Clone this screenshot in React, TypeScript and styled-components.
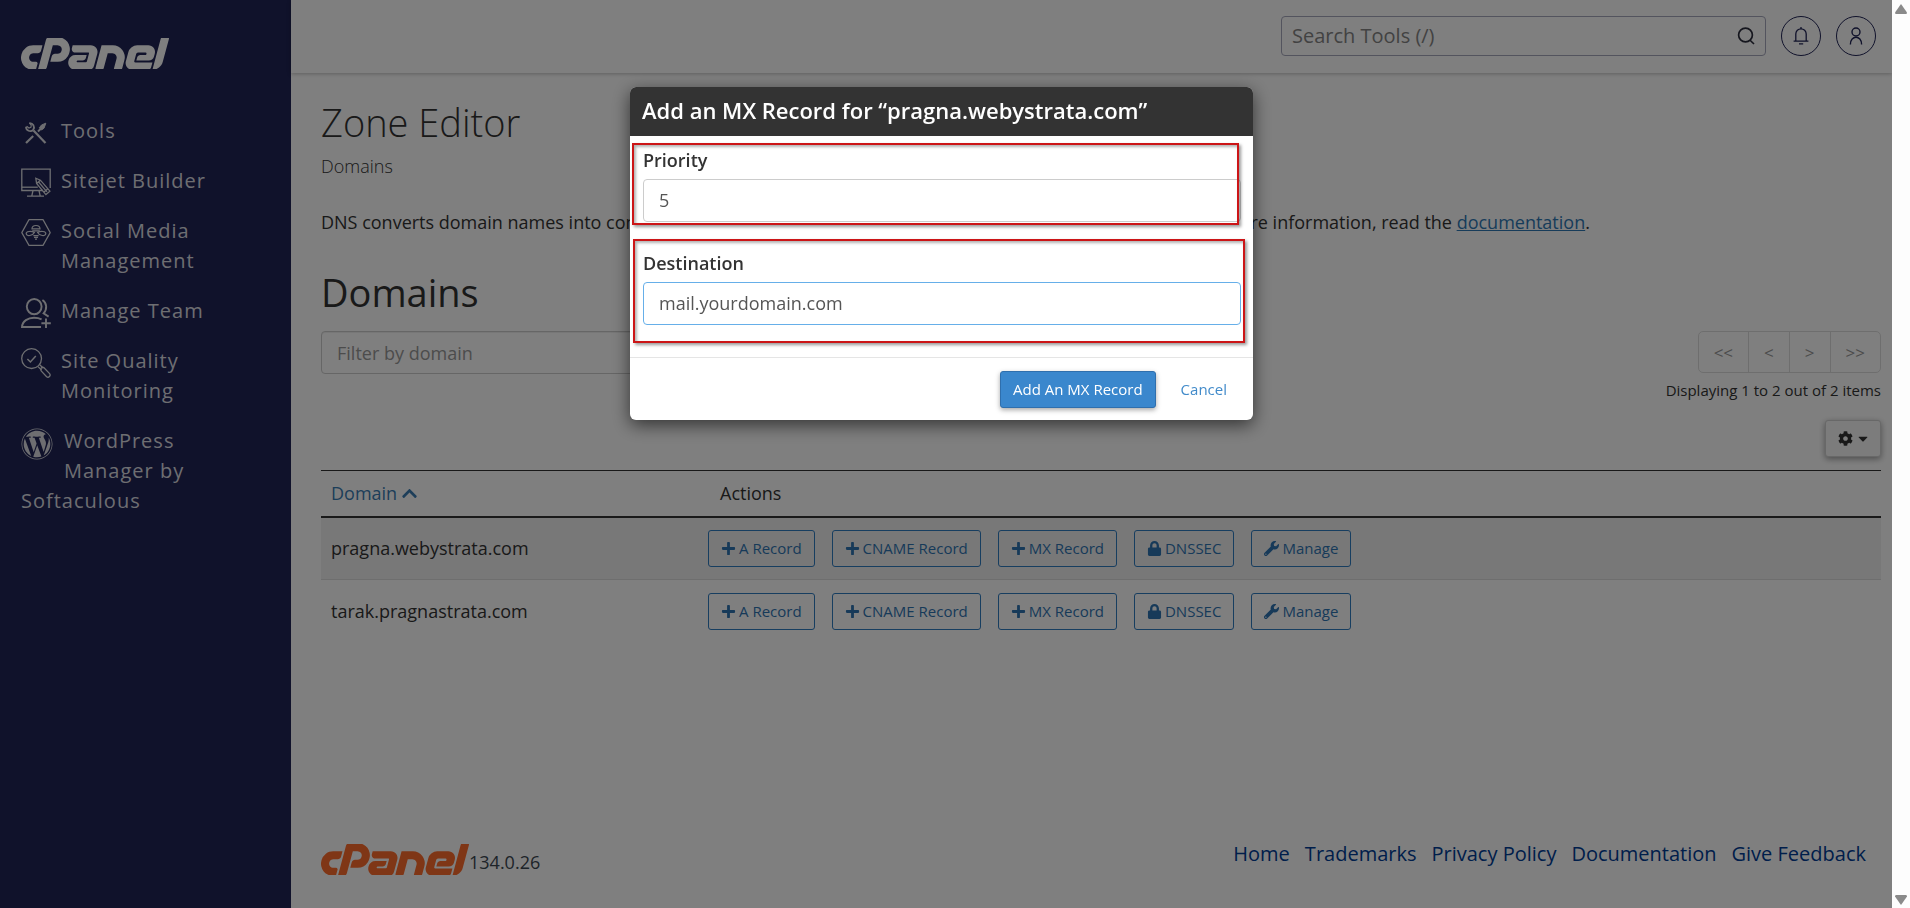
import React from "react";
import styled, { createGlobalStyle, css } from "styled-components";
import { SiCpanel } from "react-icons/si";
import {
  FaCaretDown,
  FaChevronUp,
  FaCog,
  FaLock,
  FaPlus,
  FaWordpress,
  FaWrench,
} from "react-icons/fa";

const GlobalStyle = createGlobalStyle`
  *, *::before, *::after { box-sizing: border-box; }
  body {
    margin: 0;
    background: #fff;
    color: #333;
    font-family: "Open Sans", "Noto Sans", sans-serif;
    font-size: 18px;
    line-height: 26px;
  }
  button, input { font-family: inherit; }
  h1, h2, p, ul { margin: 0; padding: 0; }
`;

const Shell = styled.div`
  display: grid;
  grid-template-columns: 291px minmax(0, 1fr) 18px;
  min-height: 100vh;
`;

/* Sidebar */

const Sidebar = styled.nav`
  background: #202456;
  padding: 38px 30px 20px 21px;
`;

const Logo = styled(SiCpanel)<{ $tone: string }>`
  display: block;
  width: 148px;
  height: 31px;
  fill: ${(p) => p.$tone};
`;

const Menu = styled.ul`
  list-style: none;
  margin-top: 47px;
`;

const MenuItem = styled.li`
  margin-bottom: 20px;
`;

const MenuLink = styled.a`
  display: block;
  color: #dcdde3;
  font-size: 20px;
  line-height: 30px;
  letter-spacing: 1px;
  text-decoration: none;
`;

const MenuIcon = styled.span<{ $wide?: boolean }>`
  float: left;
  width: ${(p) => (p.$wide ? 32 : 30)}px;
  margin: 2px ${(p) => (p.$wide ? 11 : 10)}px 0 0;
  svg {
    display: block;
    width: 100%;
    height: auto;
  }
`;

/* Top bar */

const Column = styled.div`
  display: flex;
  flex-direction: column;
`;

const TopBar = styled.header`
  display: flex;
  justify-content: flex-end;
  align-items: flex-start;
  gap: 15px;
  height: 73px;
  padding: 16px 16px 0;
  box-shadow: 0 1px 4px rgba(0, 0, 0, 0.25);
`;

const SearchBox = styled.label`
  display: flex;
  align-items: center;
  width: 485px;
  height: 40px;
  padding: 0 10px;
  border: 1px solid #a6a8bd;
  border-radius: 4px;
`;

const SearchInput = styled.input`
  flex: 1;
  min-width: 0;
  padding: 0;
  border: 0;
  outline: 0;
  background: transparent;
  font-size: 20px;
  line-height: 30px;
  &::placeholder { color: #858585; opacity: 1; }
`;

const RoundButton = styled.button`
  display: flex;
  align-items: center;
  justify-content: center;
  width: 40px;
  height: 40px;
  padding: 0;
  border: 1px solid #202456;
  border-radius: 50%;
  background: transparent;
  color: #202456;
`;

/* Page content */

const Main = styled.main`
  flex: 1;
  padding: 22px 11px 0 30px;
`;

const PageTitle = styled.h1`
  font-size: 38px;
  line-height: 54px;
  font-weight: 300;
`;

const Category = styled.p`
  margin-top: 4px;
  font-weight: 300;
`;

const Intro = styled.p`
  margin-top: 30px;
`;

const DocLink = styled.a`
  color: #2f79b5;
  text-decoration: underline;
`;

const SectionTitle = styled.h2`
  margin-top: 31px;
  font-size: 38px;
  line-height: 52px;
  font-weight: 500;
`;

const ListBar = styled.div`
  display: flex;
  justify-content: space-between;
  align-items: flex-start;
  margin-top: 13px;
`;

const inputBox = css`
  display: block;
  height: 43px;
  padding: 0 15px 2px;
  border: 1px solid #ccc;
  border-radius: 4px;
  background: transparent;
  color: #555;
  font-size: 18px;
  line-height: 26px;
  outline: 0;
`;

const FilterInput = styled.input`
  ${inputBox}
  width: 600px;
  padding-bottom: 0;
  box-shadow: inset 0 1px 1px rgba(0, 0, 0, 0.075);
  &::placeholder { color: #999; opacity: 1; }
`;

const ListTools = styled.div`
  display: flex;
  flex-direction: column;
  align-items: flex-end;
`;

const Pager = styled.div`
  display: flex;
  border: 1px solid #ddd;
  border-radius: 5px;
`;

const PagerButton = styled.button`
  height: 40px;
  padding: 0 15px;
  border: 0;
  border-left: 1px solid #ddd;
  background: transparent;
  color: #999;
  font-size: 17px;
  &:first-child { border-left: 0; }
`;

const PageInfo = styled.p`
  margin-top: 6px;
  font-size: 15px;
  line-height: 22px;
`;

const GearButton = styled.button`
  display: flex;
  align-items: center;
  gap: 5px;
  height: 37px;
  margin-top: 19px;
  padding: 0 12px;
  border: 1px solid #d0d0d0;
  border-radius: 3px;
  background: #f8f8f8;
  color: #333;
  font-size: 15px;
  box-shadow: 0 2px 6px rgba(0, 0, 0, 0.4);
  svg:last-child { width: 10px; }
`;

const ZoneTable = styled.table`
  width: 100%;
  margin-top: 13px;
  border-collapse: collapse;
  table-layout: fixed;
  border-top: 1px solid #333;
`;

const HeadCell = styled.th<{ $first?: boolean }>`
  width: ${(p) => (p.$first ? "377px" : "auto")};
  height: 46px;
  padding: 0 ${(p) => (p.$first ? 10 : 22)}px;
  border-bottom: 2px solid #333;
  font-weight: 400;
  text-align: left;
`;

const SortButton = styled.button`
  display: flex;
  align-items: center;
  gap: 4px;
  padding: 0;
  border: 0;
  background: transparent;
  color: #3a7cb3;
  font-size: 18px;
  svg { width: 17px; height: 17px; }
`;

const Row = styled.tr<{ $striped?: boolean }>`
  background: ${(p) => (p.$striped ? "#f1f1f1" : "transparent")};
`;

const Cell = styled.td`
  height: 63px;
  padding: 0 10px;
  border-bottom: 1px solid #ddd;
  ${Row}:last-child & { border-bottom: 0; }
`;

const Actions = styled.div`
  display: flex;
  gap: 17px;
`;

const ActionButton = styled.button`
  display: flex;
  align-items: center;
  gap: 3px;
  height: 37px;
  padding: 0 12px;
  border: 1px solid #2f7cc0;
  border-radius: 3px;
  background: transparent;
  color: #2f75b3;
  font-size: 15px;
  white-space: nowrap;
  svg { width: 15px; height: 15px; }
`;

const Footer = styled.footer`
  display: flex;
  justify-content: space-between;
  align-items: flex-start;
  padding: 0 26px 33px 30px;
`;

const Version = styled.div`
  display: flex;
  align-items: flex-end;
  padding-top: 5px;
  color: #3d4852;
`;

const FooterLinks = styled.div`
  display: flex;
  gap: 15px;
`;

const FooterLink = styled.a`
  color: #003c96;
  font-size: 20px;
  line-height: 30px;
  text-decoration: none;
`;

const ScrollTrack = styled.div`
  position: relative;
  z-index: 3;
  display: flex;
  flex-direction: column;
  justify-content: space-between;
  align-items: center;
  padding: 4px 0 3px;
  background: #fdfdfd;
  svg { display: block; width: 12px; height: 10px; fill: #8a8a8a; }
`;

/* Dialog */

const Backdrop = styled.div`
  position: fixed;
  inset: 0;
  z-index: 2;
  display: flex;
  justify-content: center;
  align-items: flex-start;
  padding: 87px 27px 0 0;
  background: rgba(0, 0, 0, 0.5);
`;

const Dialog = styled.form`
  width: 623px;
  border-radius: 6px;
  overflow: hidden;
  background: #fff;
  box-shadow: 0 5px 18px rgba(0, 0, 0, 0.6);
`;

const DialogTitle = styled.h2`
  height: 49px;
  padding: 7px 12px;
  background: #333;
  color: #fff;
  font-size: 22px;
  line-height: 32px;
  font-weight: 600;
`;

const DialogBody = styled.div`
  display: flex;
  flex-direction: column;
  gap: 29px;
  padding: 12px 12px 32px 13px;
`;

const Field = styled.div<{ $frame: string }>`
  position: relative;
  &::after {
    content: "";
    position: absolute;
    inset: ${(p) => p.$frame};
    border: 2px solid #cc1517;
    box-shadow: 2px 2px 3px rgba(0, 0, 0, 0.4), inset 2px 2px 3px rgba(0, 0, 0, 0.3);
    pointer-events: none;
  }
`;

const FieldLabel = styled.label`
  display: block;
  margin-bottom: 7px;
  font-size: 18px;
  line-height: 24px;
  font-weight: 600;
`;

const FieldInput = styled.input<{ $active?: boolean }>`
  ${inputBox}
  width: 100%;
  border-color: ${(p) => (p.$active ? "#66afe9" : "#ccc")};
`;

const DialogFooter = styled.div`
  display: flex;
  justify-content: flex-end;
  gap: 12px;
  padding: 13px 13px 12px;
  border-top: 1px solid #e5e5e5;
`;

const DialogButton = styled.button<{ $primary?: boolean }>`
  height: 37px;
  padding: 0 12px 2px;
  border: 1px solid ${(p) => (p.$primary ? "#2f6fad" : "transparent")};
  border-radius: 3px;
  background: ${(p) => (p.$primary ? "#3a87cd" : "transparent")};
  color: ${(p) => (p.$primary ? "#fff" : "#428bca")};
  font-size: 15px;
  font-weight: ${(p) => (p.$primary ? 500 : 400)};
  box-shadow: ${(p) => (p.$primary ? "0 2px 5px rgba(0, 0, 0, 0.35)" : "none")};
`;

const ToolsIcon = () => (
  <svg viewBox="0 0 30 30" fill="none" stroke="currentColor">
    <path d="M12.5 12.5 24.5 25" strokeWidth="2.2" />
    <path d="M5 25 12.2 18" strokeWidth="2.2" />
    <path d="M17 13.5 20 10.5" strokeWidth="2" />
    <path d="M24.8 5.2 20.5 7 18.4 9.8 20.5 12 23 10.2Z" fill="currentColor" strokeWidth="1" />
    <path d="M8.4 5.2a4.2 4.2 0 0 1 3.8 6.6A4.2 4.2 0 0 1 5 8.800" strokeWidth="1.800" />
    <path d="M5.600 8.200 8 10l2-.8.2-2.200-1.800-1.800" strokeWidth="1.200" />
  </svg>
);

const SitejetIcon = () => (
  <svg viewBox="0 0 30 30" fill="none" stroke="currentColor" strokeWidth="1.3">
    <path d="M22 22.5H.8V1.2h28.4V20" />
    <path d="M.8 19.2h16" />
    <path d="M12 22.5 10.8 28M18 22.5 19.2 28M6 28.2h17" />
    <path d="M14.8 10.2 15.6 15.4 24.9 26.6 28.9 23.2 19.4 12.2Z M15.6 15.4l3.8-3.2M22.8 24.2l4-3.4M17.6 14 26 23.8" />
  </svg>
);

const BeeIcon = () => (
  <svg viewBox="0 0 30 30" fill="none" stroke="currentColor" strokeWidth="1.2">
    <path d="M8 1.6h14L29.2 14.6 22 27.4H8L.8 14.6Z" strokeLinejoin="round" />
    <path d="M11 10.8c0-4.4 8-4.4 8 0ZM11.2 12.8h7.6" />
    <path d="M13.4 14.4C10 12.6 5 13.4 5.2 15.6c.4 3.4 6.6 2 8.2-1.2ZM16.6 14.4c3.4-1.8 8.4-1 8.2 1.2-.4 3.4-6.6 2-8.2-1.2Z" />
    <path d="M12.4 17.6h5.2M13 19.4h4M14 21.2h2" />
  </svg>
);

const TeamIcon = () => (
  <svg viewBox="0 0 30 30" fill="none" stroke="currentColor" strokeWidth="1.9">
    <ellipse cx="13.2" cy="8.6" rx="7.4" ry="7.6" />
    <path d="M20 29H1c.4-6 6-9.2 12-9.2 3 0 5.6.6 7.6 1.6" />
    <path d="M21.4 2c4.6 3 5 9.2 1.2 13.4l5 3.2" />
    <path d="M25 20.5v9.5M20.4 25.2h9.4" />
  </svg>
);

const QualityIcon = () => (
  <svg viewBox="0 0 30 30" fill="none" stroke="currentColor" strokeWidth="1.3">
    <circle cx="10.6" cy="10.6" r="9.9" />
    <path d="M6.4 11 9.4 14l5.4-6" strokeWidth="1.5" />
    <path d="M17 18.6 20.5 22M18.8 16.8 22.3 20.2" />
    <path d="M20 20.8c.2-1.4 1.6-2 2.8-1.2l5.8 6c1.6 2.2-1 4.6-3 3.2l-5.2-5.6c-.6-.8-.6-1.6-.4-2.4Z" />
  </svg>
);

const SearchIcon = () => (
  <svg width="18" height="18" viewBox="0 0 18 18" fill="none" stroke="#2b2d3c" strokeWidth="1.7">
    <circle cx="8.5" cy="8" r="6.9" />
    <path d="M12.8 13 17 17" />
  </svg>
);

const BellIcon = () => (
  <svg width="16" height="18" viewBox="0 0 16 18" fill="none" stroke="currentColor" strokeWidth="1.3">
    <path d="M.6 14.2h14.8M2.8 14V7a5.2 5.2 0 0 1 10.4 0v7M6 16.8h4.2" />
    <path d="M8 0v2" />
  </svg>
);

const UserIcon = () => (
  <svg width="16" height="18" viewBox="0 0 16 18" fill="none" stroke="currentColor" strokeWidth="1.4">
    <circle cx="8" cy="5" r="4" />
    <path d="M2.4 17.4c0-9.6 11.2-9.6 11.2 0" />
  </svg>
);

const menu = [
  { label: "Tools", icon: <ToolsIcon /> },
  { label: "Sitejet Builder", icon: <SitejetIcon /> },
  { label: "Social Media Management", icon: <BeeIcon /> },
  { label: "Manage Team", icon: <TeamIcon /> },
  { label: "Site Quality Monitoring", icon: <QualityIcon /> },
  { label: "WordPress Manager by Softaculous", icon: <FaWordpress />, wide: true },
];

const actions = [
  { label: "A Record", icon: <FaPlus /> },
  { label: "CNAME Record", icon: <FaPlus /> },
  { label: "MX Record", icon: <FaPlus /> },
  { label: "DNSSEC", icon: <FaLock /> },
  { label: "Manage", icon: <FaWrench /> },
];

const domains = ["pragna.webystrata.com", "tarak.pragnastrata.com"];

const footerLinks = ["Home", "Trademarks", "Privacy Policy", "Documentation", "Give Feedback"];

const pagerSteps = [
  { text: "<<", name: "First page" },
  { text: "<", name: "Previous page" },
  { text: ">", name: "Next page" },
  { text: ">>", name: "Last page" },
];

const logoBox = "0 9.48 24 5.04";

export default function App() {
  return (
    <>
      <GlobalStyle />
      <Shell>
        <Sidebar>
          <Logo $tone="#fff" viewBox={logoBox} preserveAspectRatio="none" />
          <Menu>
            {menu.map((item) => (
              <MenuItem key={item.label}>
                <MenuLink href="#">
                  <MenuIcon $wide={item.wide}>{item.icon}</MenuIcon>
                  {item.label}
                </MenuLink>
              </MenuItem>
            ))}
          </Menu>
        </Sidebar>

        <Column>
          <TopBar>
            <SearchBox>
              <SearchInput type="text" aria-label="Search Tools" placeholder="Search Tools (/)" />
              <SearchIcon />
            </SearchBox>
            <RoundButton type="button" aria-label="Notifications"><BellIcon /></RoundButton>
            <RoundButton type="button" aria-label="Account"><UserIcon /></RoundButton>
          </TopBar>

          <Main>
            <PageTitle>Zone Editor</PageTitle>
            <Category>Domains</Category>
            <Intro>
              DNS converts domain names into computer-readable IP addresses. Use this tool to manage DNS zones. For
              more information, read the <DocLink href="#">documentation</DocLink>.
            </Intro>
            <SectionTitle>Domains</SectionTitle>
            <ListBar>
              <FilterInput type="text" aria-label="Filter by domain" placeholder="Filter by domain" />
              <ListTools>
                <Pager>
                  {pagerSteps.map((step) => (
                    <PagerButton key={step.name} type="button" aria-label={step.name}>{step.text}</PagerButton>
                  ))}
                </Pager>
                <PageInfo>Displaying 1 to 2 out of 2 items</PageInfo>
                <GearButton type="button" aria-label="Table settings">
                  <FaCog />
                  <FaCaretDown />
                </GearButton>
              </ListTools>
            </ListBar>
            <ZoneTable>
              <thead>
                <tr>
                  <HeadCell $first><SortButton type="button">Domain<FaChevronUp /></SortButton></HeadCell>
                  <HeadCell>Actions</HeadCell>
                </tr>
              </thead>
              <tbody>
                {domains.map((domain, i) => (
                  <Row key={domain} $striped={i % 2 === 0}>
                    <Cell>{domain}</Cell>
                    <Cell>
                      <Actions>
                        {actions.map((action) => (
                          <ActionButton key={action.label} type="button">
                            {action.icon}
                            {action.label}
                          </ActionButton>
                        ))}
                      </Actions>
                    </Cell>
                  </Row>
                ))}
              </tbody>
            </ZoneTable>
          </Main>

          <Footer>
            <Version>
              <Logo $tone="#ff6c2c" viewBox={logoBox} preserveAspectRatio="none" />
              134.0.26
            </Version>
            <FooterLinks>
              {footerLinks.map((link) => (
                <FooterLink key={link} href="#">{link}</FooterLink>
              ))}
            </FooterLinks>
          </Footer>
        </Column>

        <ScrollTrack aria-hidden="true">
          <svg viewBox="0 0 12 10"><path d="M6 0 12 8.5Q12 10 11 10H1Q0 10 0 8.5Z" /></svg>
          <svg viewBox="0 0 12 10"><path d="M6 10 12 1.5Q12 0 11 0H1Q0 0 0 1.5Z" /></svg>
        </ScrollTrack>
      </Shell>

      <Backdrop>
        <Dialog role="dialog" aria-labelledby="mx-title">
          <DialogTitle id="mx-title">Add an MX Record for “pragna.webystrata.com”</DialogTitle>
          <DialogBody>
            <Field $frame="-5px 2px -3px -11px">
              <FieldLabel htmlFor="priority">Priority</FieldLabel>
              <FieldInput id="priority" type="text" defaultValue="5" />
            </Field>
            <Field $frame="-12px -4px -18px -10px">
              <FieldLabel htmlFor="destination">Destination</FieldLabel>
              <FieldInput id="destination" type="text" defaultValue="mail.yourdomain.com" $active />
            </Field>
          </DialogBody>
          <DialogFooter>
            <DialogButton type="button" $primary>Add An MX Record</DialogButton>
            <DialogButton type="button">Cancel</DialogButton>
          </DialogFooter>
        </Dialog>
      </Backdrop>
    </>
  );
}
